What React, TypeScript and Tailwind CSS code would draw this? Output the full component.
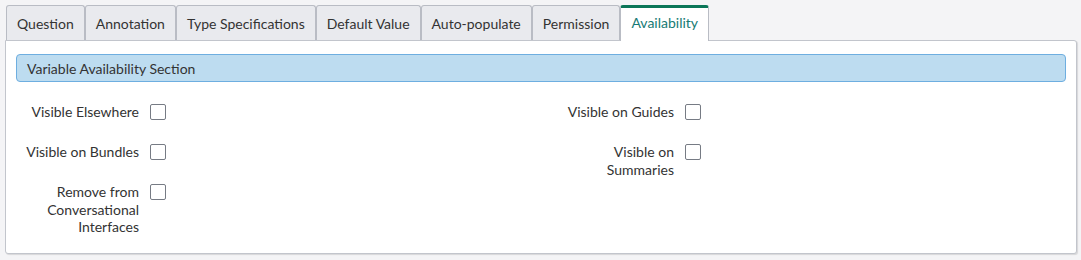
import React from 'react';

const tabs = ['Question', 'Annotation', 'Type Specifications', 'Default Value', 'Auto-populate', 'Permission', 'Availability'];

function Check() {
  return <span className="mt-[1px] block h-4 w-4 shrink-0 rounded-[2px] border border-[#767b84] bg-white" />;
}

function Field({ label }: { label: string }) {
  return (
    <div className="flex items-start">
      <div className="w-[144px] pl-[13px] pr-[11px] text-right leading-[17.5px]">{label}</div>
      <Check />
    </div>
  );
}

export default function App() {
  const active = 'Availability';
  return (
    <div className="min-h-[260px] bg-[#f4f4f6] pl-[5px] pr-[4px] pt-[5px] text-[14px] text-[#333] [font-family:Lato,'Open_Sans',sans-serif]">
      {/* Tab strip */}
      <div className="flex pl-px">
        {tabs.map((t) =>
          t === active ? (
            <div
              key={t}
              className="relative z-10 -mb-px h-[36px] rounded-t-[3px] border-x border-t-[3px] border-x-[#b9bcc4] border-t-[#0b7658] bg-white px-[10px] pt-[4px] text-[#167a74]"
            >
              {t}
            </div>
          ) : (
            <div
              key={t}
              className="h-[35px] rounded-t-[3px] border border-b-0 border-[#b9bcc4] bg-[#e9eaee] px-[10px] pt-[7px]"
            >
              {t}
            </div>
          )
        )}
      </div>

      {/* Panel */}
      <div className="h-[214px] rounded-b-[3px] rounded-tr-[3px] border border-[#c2c5cc] bg-white px-[10px] pt-[13px] shadow-[1px_1px_1px_rgba(0,0,0,0.12)]">
        <div className="flex h-[28px] items-center rounded-[4px] border border-[#6eaee0] bg-[#bddcf0] px-[10px]">
          Variable Availability Section
        </div>

        <div className="mt-[21px] grid grid-cols-2 -mx-[10px]">
          <div className="flex flex-col gap-[22.5px]">
            <Field label="Visible Elsewhere" />
            <Field label="Visible on Bundles" />
            <Field label="Remove from Conversational Interfaces" />
          </div>
          <div className="flex flex-col gap-[22.5px]">
            <Field label="Visible on Guides" />
            <Field label="Visible on Summaries" />
          </div>
        </div>
      </div>
    </div>
  );
}
